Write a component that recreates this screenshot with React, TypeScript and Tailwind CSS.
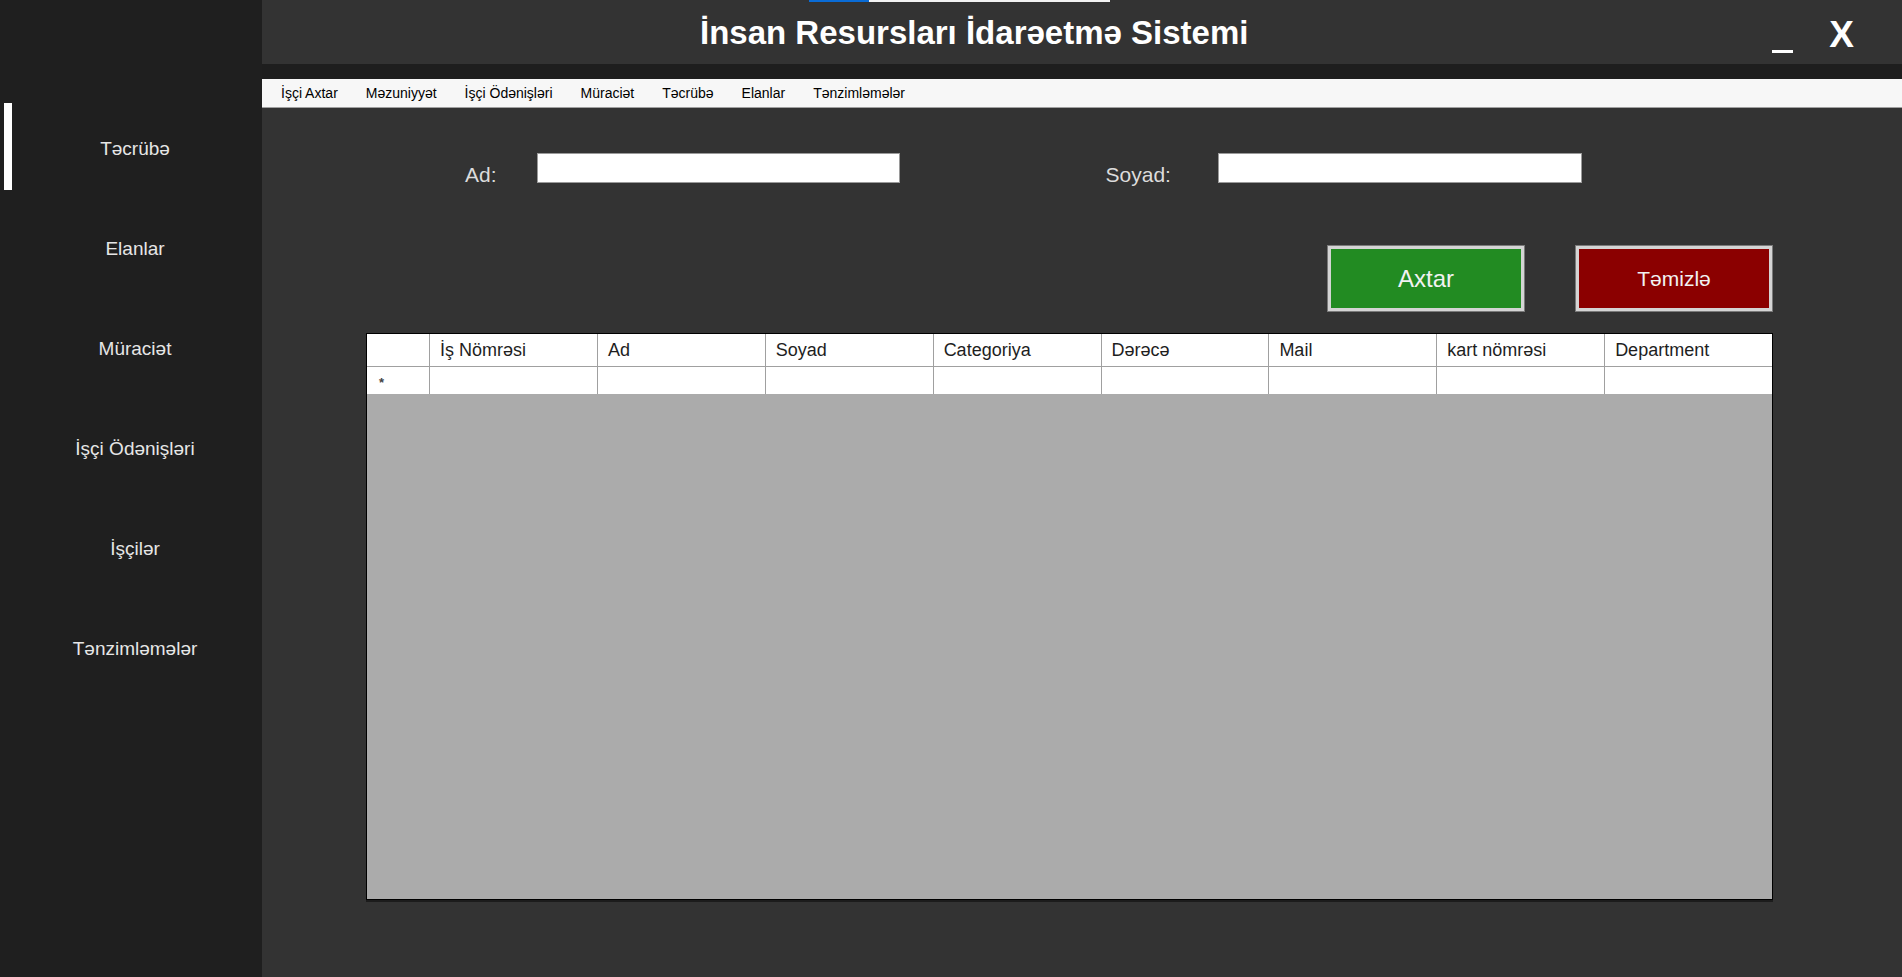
import React from 'react';

const sideItems = ['Təcrübə', 'Elanlar', 'Müraciət', 'İşçi Ödənişləri', 'İşçilər', 'Tənzimləmələr'];

const menuItems = ['İşçi Axtar', 'Məzuniyyət', 'İşçi Ödənişləri', 'Müraciət', 'Təcrübə', 'Elanlar', 'Tənzimləmələr'];

const columns = ['İş Nömrəsi', 'Ad', 'Soyad', 'Categoriya', 'Dərəcə', 'Mail', 'kart nömrəsi', 'Department'];

const App: React.FC = () => {
  return (
    <div className="flex h-[977px] w-[1902px] overflow-hidden bg-[#333333] font-['Liberation_Sans',sans-serif]">
      {/* sidebar */}
      <aside className="flex w-[262px] shrink-0 flex-col bg-[#1f1f1f] pt-[99px]">
        {sideItems.map((item, i) => (
          <div key={item} className="relative flex h-[100px] items-center justify-center pl-[8px]">
            {i === 0 && <span className="absolute left-[4px] top-[4px] h-[87px] w-[8px] bg-white" />}
            <span className="text-[19px] text-[#e6e6e6]">{item}</span>
          </div>
        ))}
      </aside>

      <main className="flex flex-1 flex-col">
        {/* title bar */}
        <header className="relative flex h-[64px] items-center bg-[#333333]">
          <div className="absolute left-[547px] top-0 flex h-[2px]">
            <span className="w-[60px] bg-[#0a6cd6]" />
            <span className="w-[241px] bg-[#f2f2f2]" />
          </div>
          <h1 className="ml-[438px] text-[33px] font-bold leading-none text-white">İnsan Resursları İdarəetmə Sistemi</h1>
          <div className="ml-auto mr-[48px] flex items-start gap-[36px] self-start pt-[16px] text-white">
            <span className="mt-[34px] h-[3px] w-[21px] bg-white" />
            <span className="text-[37px] font-bold leading-none">X</span>
          </div>
        </header>

        <div className="h-[15px] bg-[#1e1e1e]" />

        {/* menu strip */}
        <nav className="flex h-[29px] items-center gap-[28px] border-b border-[#a0a0a0] bg-[#f7f7f7] pl-[19px] text-[14px] text-black">
          {menuItems.map((m) => (
            <span key={m}>{m}</span>
          ))}
        </nav>

        {/* search form */}
        <div className="flex pt-[45px]">
          <div className="flex items-start">
            <label className="ml-[203px] mt-[8px] text-[21px] leading-[28px] text-[#dcdcdc]">Ad:</label>
            <div className="ml-[40px] h-[30px] w-[363px] border border-[#9a9a9a] bg-white" />
          </div>
          <div className="flex items-start">
            <label className="ml-[206px] mt-[8px] text-[21px] leading-[28px] text-[#dcdcdc]">Soyad:</label>
            <div className="ml-[47px] h-[30px] w-[364px] border border-[#9a9a9a] bg-white" />
          </div>
        </div>

        <div className="mt-[57px] flex gap-[52px] pl-[1066px]">
          <button className="flex h-[65px] w-[196px] items-center justify-center border-[3px] border-[#d4d4d4] bg-[#228b22] text-[24px] text-[#f2f2f2] outline outline-1 outline-[#7a7a7a]">
            Axtar
          </button>
          <button className="flex h-[65px] w-[196px] items-center justify-center border-[3px] border-[#d4d4d4] bg-[#8b0000] text-[21px] text-[#f2f2f2] outline outline-1 outline-[#7a7a7a]">
            Təmizlə
          </button>
        </div>

        {/* data grid */}
        <div className="ml-[104px] mt-[22px] flex h-[567px] w-[1407px] flex-col border border-black bg-[#ababab] shadow-[0_2px_0_#1c1c1c]">
          <div className="flex h-[33px] border-b border-[#a0a0a0] bg-white">
            <div className="w-[63px] shrink-0 border-r border-[#a0a0a0]" />
            {columns.map((c) => (
              <div key={c} className="flex flex-1 items-center border-r border-[#a0a0a0] pl-[10px] text-[18px] text-[#1e1e1e] last:border-r-0">
                {c}
              </div>
            ))}
          </div>
          <div className="flex h-[27px] bg-white">
            <div className="flex w-[63px] shrink-0 items-center border-r border-[#a0a0a0] pl-[12px]">
              <span className="mt-[4px] text-[13px] font-bold leading-none text-[#444]">*</span>
            </div>
            {columns.map((c) => (
              <div key={c} className="flex-1 border-r border-[#a0a0a0] last:border-r-0" />
            ))}
          </div>
        </div>
      </main>
    </div>
  );
};

export default App;
